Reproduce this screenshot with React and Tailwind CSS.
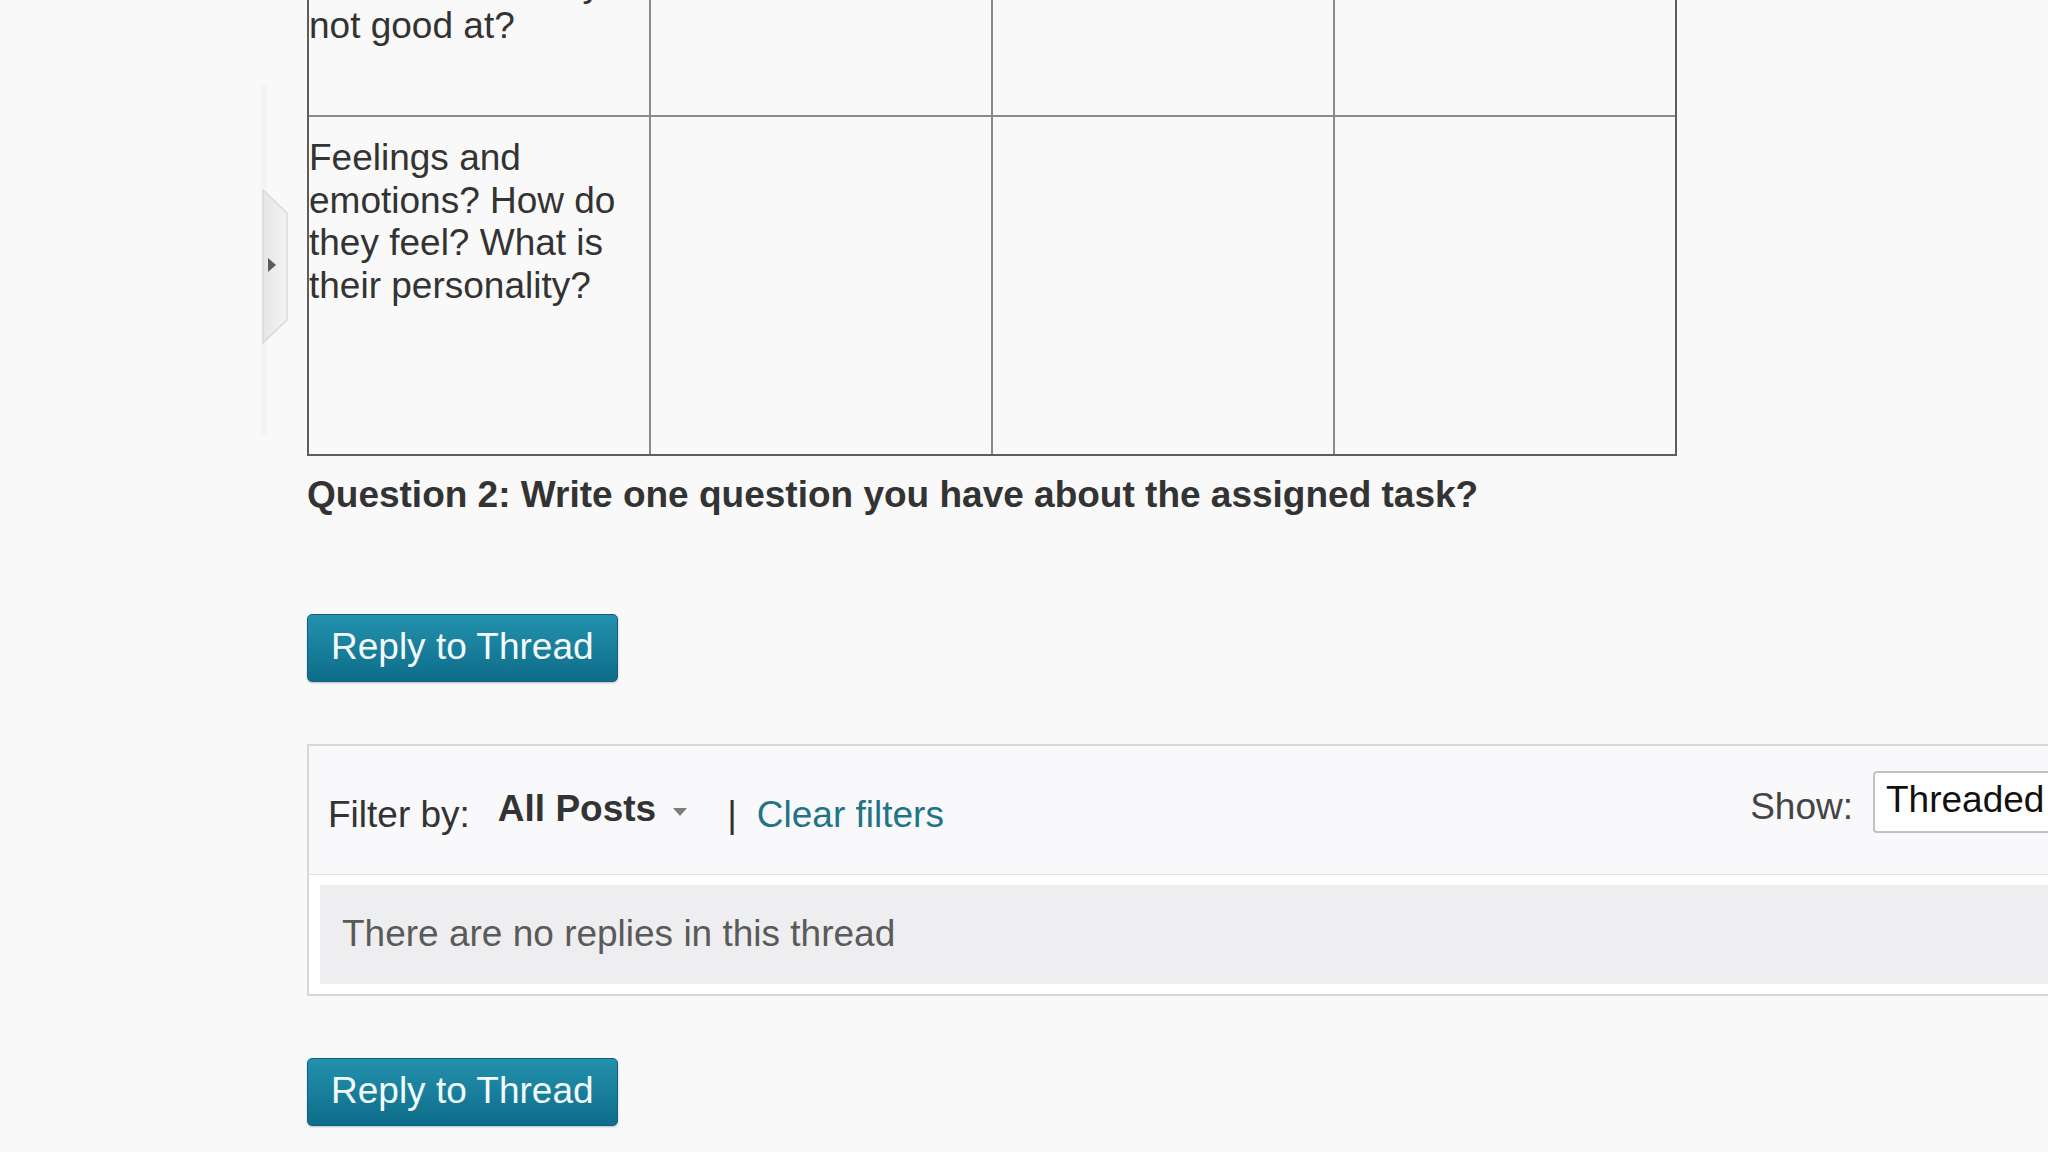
import React from "react";

const rows = [
  {
    id: "r1",
    label: "What are they good at? What are they not good at?",
    height: "h-[214px]",
    pad: "pt-[17px]",
  },
  {
    id: "r2",
    label: "Feelings and emotions? How do they feel? What is their personality?",
    height: "h-[337px]",
    pad: "pt-[20px]",
  },
];

const ReplyButton = () => (
  <button className="inline-flex h-[68px] items-center rounded-[5px] border border-[#0c6480] bg-gradient-to-b from-[#2391ae] to-[#0d6d8a] px-[23px] text-[37px] leading-[1.15] text-[#f2fafc] shadow-[0_1px_2px_rgba(0,0,0,0.25)]">
    Reply to Thread
  </button>
);

const SideTab = () => (
  <>
    {/* faint shadow of the collapsed side panel */}
    <div className="absolute left-[259px] top-[85px] h-[350px] w-[10px] bg-gradient-to-r from-[#f9f9f9] via-[#f0f0f0] to-[#f9f9f9] opacity-60" />
    <svg
      className="absolute left-[262px] top-[189px]"
      width="27"
      height="156"
      viewBox="0 0 27 156"
    >
      <defs>
        <linearGradient id="tabFill" x1="0" y1="0" x2="1" y2="0">
          <stop offset="0" stopColor="#e6e6e6" />
          <stop offset="1" stopColor="#f3f3f3" />
        </linearGradient>
      </defs>
      <polygon
        points="1,1 25,24 25,131 1,154"
        fill="url(#tabFill)"
        stroke="#d9d9d9"
        strokeWidth="1.5"
      />
      <polygon points="6,69 14,76 6,83" fill="#5c5c5c" />
    </svg>
  </>
);

export default function App() {
  return (
    <div className="relative min-h-screen w-full overflow-hidden bg-[#f9f9f9] font-['Liberation_Sans',Arial,sans-serif] text-[37px] leading-[1.15] text-[#333]">
      <SideTab />

      <div className="ml-[307px] -mt-[99px] pb-[30px]">
        {/* Assignment table */}
        <div className="grid w-[1370px] grid-cols-[342px_342px_342px_1fr] border-2 border-[#5e5e5e]">
          {rows.map((row, ri) =>
            [0, 1, 2, 3].map((ci) => (
              <div
                key={row.id + ci}
                className={`${row.height} border-[#8a8a8a] ${
                  ci < 3 ? "border-r-2" : ""
                } ${ri < rows.length - 1 ? "border-b-2" : ""} pr-1 ${row.pad}`}
              >
                {ci === 0 ? row.label : null}
              </div>
            ))
          )}
        </div>

        <p className="mt-[18px] font-bold text-[#333]">
          Question 2: Write one question you have about the assigned task?
        </p>

        <div className="mt-[97px]">
          <ReplyButton />
        </div>

        {/* Replies panel */}
        <div className="mt-[62px] w-[1848px] border-2 border-[#d8d8d8] bg-white">
          <div className="flex h-[129px] items-start border-b border-[#e3e3e3] bg-[#f9f9fb] pl-[19px] pr-[20px]">
            <span className="mt-[48px] text-[#333]">Filter by:</span>
            <span className="ml-[28px] mt-[42px] font-bold text-[#333]">
              All Posts
            </span>
            <svg
              className="ml-[16px] mt-[61px]"
              width="16"
              height="10"
              viewBox="0 0 16 10"
            >
              <polygon points="1,1 15,1 8,9" fill="#7d7d7d" />
            </svg>
            <span className="ml-[39px] mt-[48px] text-[#333]">|</span>
            <span className="ml-[20px] mt-[48px] text-[#1f7486]">
              Clear filters
            </span>
            <div className="ml-auto flex items-start">
              <span className="mt-[40px] text-[#444]">Show:</span>
              <div className="ml-[20px] mt-[25px] h-[62px] w-[260px] rounded-[4px] border-2 border-[#c2c2c2] bg-white pl-[11px] pt-[6px] text-[#111]">
                Threaded
              </div>
            </div>
          </div>
          <div className="px-[11px] pb-[10px] pt-[10px]">
            <div className="flex h-[99px] items-center bg-[#eeeef0] pl-[22px] text-[#5a5a5a]">
              There are no replies in this thread
            </div>
          </div>
        </div>

        <div className="mt-[62px]">
          <ReplyButton />
        </div>
      </div>
    </div>
  );
}
